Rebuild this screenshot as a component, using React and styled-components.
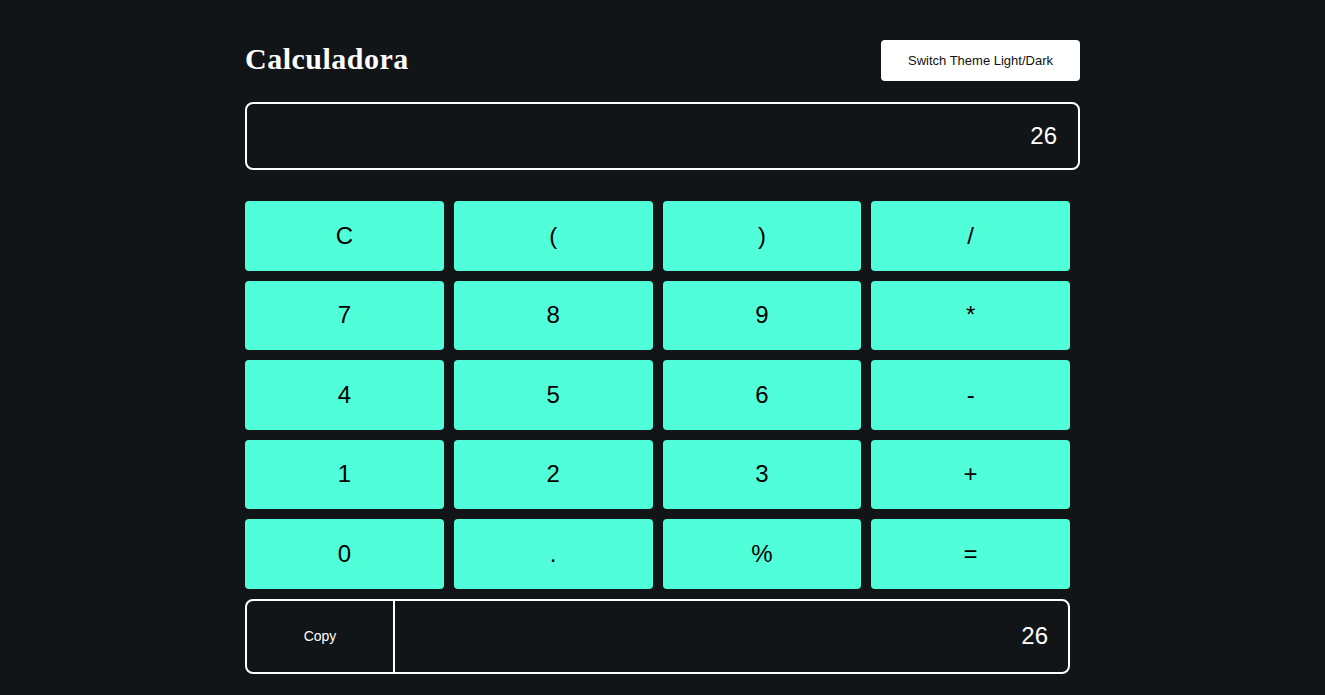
import React, { useState } from "react";
import styled, { createGlobalStyle } from "styled-components";

const GlobalStyle = createGlobalStyle`
  body {
    margin: 0;
    background: #121517;
    font-family: "Liberation Sans", Arial, sans-serif;
  }
`;

const Page = styled.div`
  width: 835px;
  margin: 0 auto;
  padding-top: 40px;
`;

const Header = styled.header`
  display: flex;
  justify-content: space-between;
  align-items: center;
  height: 41px;
`;

const Title = styled.h1`
  margin: 0 0 4px;
  font-family: "Liberation Serif", "Times New Roman", serif;
  font-size: 30px;
  font-weight: 700;
  letter-spacing: 0.5px;
  color: #ffffff;
`;

const ThemeButton = styled.button`
  width: 199px;
  height: 41px;
  border: none;
  border-radius: 4px;
  background: #ffffff;
  color: #111;
  font-family: "Liberation Sans", Arial, sans-serif;
  font-size: 13px;
  cursor: pointer;
`;

const Display = styled.div`
  box-sizing: border-box;
  margin-top: 21px;
  height: 68px;
  border: 2px solid #ffffff;
  border-radius: 8px;
  display: flex;
  align-items: center;
  justify-content: flex-end;
  padding: 0 21px;
  color: #ffffff;
  font-size: 24px;
`;

const Keys = styled.div`
  margin-top: 31px;
  width: 825px;
  display: grid;
  grid-template-columns: repeat(4, 1fr);
  grid-auto-rows: 69.5px;
  gap: 10px;
`;

const Key = styled.button`
  border: none;
  border-radius: 4px;
  background: #50ffda;
  color: #000;
  font-family: "Liberation Sans", Arial, sans-serif;
  font-size: 24px;
  cursor: pointer;
`;

const Result = styled.div`
  box-sizing: border-box;
  margin-top: 10px;
  width: 825px;
  height: 75px;
  border: 2px solid #ffffff;
  border-radius: 8px;
  display: grid;
  grid-template-columns: 148px 1fr;
`;

const CopyButton = styled.button`
  border: none;
  border-right: 2px solid #ffffff;
  background: transparent;
  color: #ffffff;
  font-family: "Liberation Sans", Arial, sans-serif;
  font-size: 14px;
  cursor: pointer;
`;

const ResultValue = styled.div`
  display: flex;
  align-items: center;
  justify-content: flex-end;
  padding-right: 20px;
  color: #ffffff;
  font-size: 24px;
`;

const keys = ["C", "(", ")", "/", "7", "8", "9", "*", "4", "5", "6", "-", "1", "2", "3", "+", "0", ".", "%", "="];

export default function App() {
  const [value] = useState("26");
  return (
    <>
      <GlobalStyle />
      <Page>
        <Header>
          <Title>Calculadora</Title>
          <ThemeButton>Switch Theme Light/Dark</ThemeButton>
        </Header>
        <Display>{value}</Display>
        <Keys>
          {keys.map((k) => (
            <Key key={k}>{k}</Key>
          ))}
        </Keys>
        <Result>
          <CopyButton>Copy</CopyButton>
          <ResultValue>{value}</ResultValue>
        </Result>
      </Page>
    </>
  );
}
